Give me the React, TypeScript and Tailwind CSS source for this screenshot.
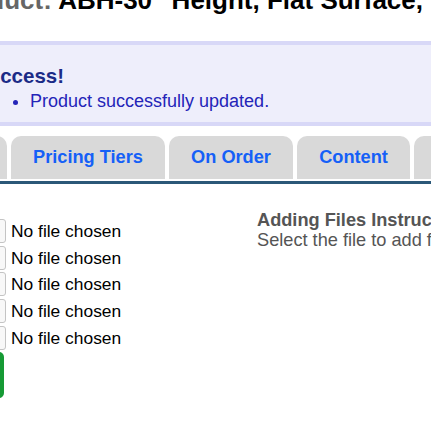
const FILE_ROWS = [1, 2, 3, 4, 5];

const TABS = [
  { label: 'Pricing Tiers', w: 'w-[154px]' },
  { label: 'On Order', w: 'w-[124px]' },
  { label: 'Content', w: 'w-[113px]' },
];

const App = () => {
  return (
    <div className="w-[431px] h-[437px] overflow-hidden bg-white font-['Liberation_Sans',Arial,sans-serif]">
      {/* Title (scrolled, only the bottom shows) */}
      <div className="h-[41px] overflow-hidden">
        <h1 className="-mt-[15px] -ml-[55px] whitespace-nowrap text-[26px] leading-[30px] font-bold">
          <span className="text-[#666]">Product: </span>
          <span className="text-black">ABH-30" Height, Flat Surface, Wall Mount</span>
        </h1>
      </div>

      {/* Success alert */}
      <div className="h-[85px] border-y-[4px] border-[#d8d8f7] bg-[#eeeefb] overflow-hidden">
        <h4 className="mt-[19px] -ml-[26px] text-[20.5px] leading-[24px] font-bold text-[#1b2b87] whitespace-nowrap">
          Success!
        </h4>
        <ul className="mt-[2px] pl-[30px] list-disc text-[18px] leading-[22px] text-[#2424b8]">
          <li>Product successfully updated.</li>
        </ul>
      </div>

      {/* Tabs */}
      <div className="mt-[10px] flex items-end gap-[4px] -ml-[36px] whitespace-nowrap">
        <div className="w-[43px] h-[43px] rounded-t-[10px] bg-[#d9d9d9] shrink-0" />
        {TABS.map((tab) => (
          <div
            key={tab.label}
            className={`${tab.w} h-[43px] shrink-0 rounded-t-[10px] bg-[#d9d9d9] flex items-center justify-center text-[18.2px] font-bold text-[#1560f7]`}
          >
            {tab.label}
          </div>
        ))}
        <div className="w-[60px] h-[43px] rounded-t-[10px] bg-[#d9d9d9] shrink-0" />
      </div>
      <div className="mt-[2px] h-[3px] bg-[#2b5878]" />

      {/* Files */}
      <div className="flex">
        <div className="w-[257px] shrink-0 pt-[35px]">
          <div className="flex flex-col gap-[2.7px]">
            {FILE_ROWS.map((n) => (
              <div key={n} className="flex items-center h-[24px]">
                <div className="-ml-[60px] w-[66px] h-[24px] rounded-[3px] border border-[#c4c4c4] bg-[#f8f8f8] shrink-0" />
                <span className="ml-[5px] text-[17.4px] text-black whitespace-nowrap">No file chosen</span>
              </div>
            ))}
          </div>
          <div className="mt-[2px] -ml-[80px] w-[84px] h-[46px] rounded-[5px] bg-[#169a35]" />
        </div>
        <div className="pt-[26px] text-[18.2px] leading-[20px] text-[#555] whitespace-nowrap">
          <div className="font-bold">Adding Files Instructions</div>
          <div>Select the file to add from your computer.</div>
        </div>
      </div>
    </div>
  );
};

export default App;
